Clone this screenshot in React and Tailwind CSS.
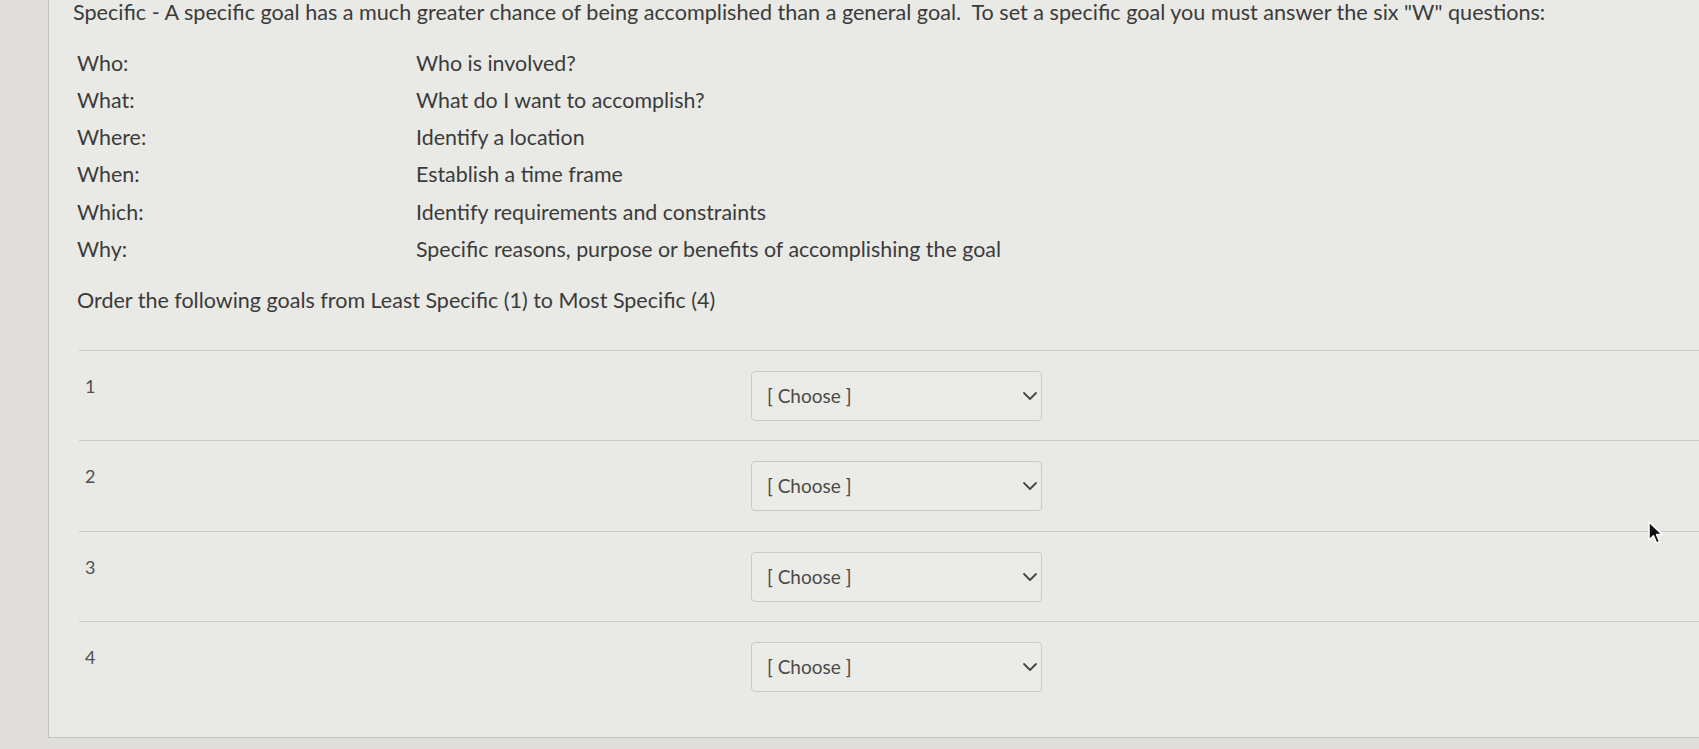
import React from "react";

const wRows = [
  ["Who:", "Who is involved?"],
  ["What:", "What do I want to accomplish?"],
  ["Where:", "Identify a location"],
  ["When:", "Establish a time frame"],
  ["Which:", "Identify requirements and constraints"],
  ["Why:", "Specific reasons, purpose or benefits of accomplishing the goal"],
];

function ChooseSelect() {
  return (
    <div className="flex items-center justify-between w-[291px] h-[50px] rounded-[4px] border border-[#c9c9c5] bg-[#ebebe8] pl-[15px] pr-[3px]">
      <span className="text-[19px] text-[#4a4a4a]">[ Choose ]</span>
      <svg width="16" height="10" viewBox="0 0 16 10" fill="none">
        <path d="M2 2 L8 8 L14 2" stroke="#454545" strokeWidth="1.8" strokeLinecap="round" strokeLinejoin="round" />
      </svg>
    </div>
  );
}

export default function App() {
  return (
    <div
      className="relative flex h-[749px] w-full overflow-hidden bg-[#dfdeda] text-[#3b3b3b]"
      style={{ fontFamily: "Lato, 'Open Sans', sans-serif" }}
    >
      <div className="ml-[48px] flex h-[738px] flex-1 flex-col border-b border-l border-[#c3c3bf] bg-[#e9e9e6]">
        <p className="pl-[24px] text-[21.6px] leading-[26px] -mt-[1px] whitespace-nowrap">
          Specific - A specific goal has a much greater chance of being accomplished than a general goal.&nbsp; To set a specific goal you must answer the six "W" questions:
        </p>

        <div className="mt-[19px] pl-[28px] text-[21.4px]">
          {wRows.map(([label, text]) => (
            <div key={label} className="flex h-[37.3px] items-center">
              <span className="w-[339px]">{label}</span>
              <span>{text}</span>
            </div>
          ))}
        </div>

        <p className="mt-[19px] pl-[28px] text-[21.5px] leading-[26px]">
          Order the following goals from Least Specific (1) to Most Specific (4)
        </p>

        <div className="mt-[37px] ml-[30px] flex flex-1 flex-col">
          {[1, 2, 3, 4].map((n) => (
            <div
              key={n}
              className={`flex border-t border-[#cbcbc7] pt-[20px] ${n === 4 ? "flex-1" : "h-[90.5px]"}`}
            >
              <span className="mt-[3px] w-[672px] pl-[6px] text-[18px] leading-[24px] text-[#505050]">{n}</span>
              <ChooseSelect />
            </div>
          ))}
        </div>
      </div>

      <svg className="absolute left-[1647px] top-[520px]" width="18" height="26" viewBox="0 0 18 26">
        <path d="M2 2 L2 20 L6.5 15.8 L9.6 23 L12.6 21.7 L9.6 14.6 L15.5 14.6 Z" fill="#111" stroke="#fff" strokeWidth="1.5" strokeLinejoin="round" />
      </svg>
    </div>
  );
}
